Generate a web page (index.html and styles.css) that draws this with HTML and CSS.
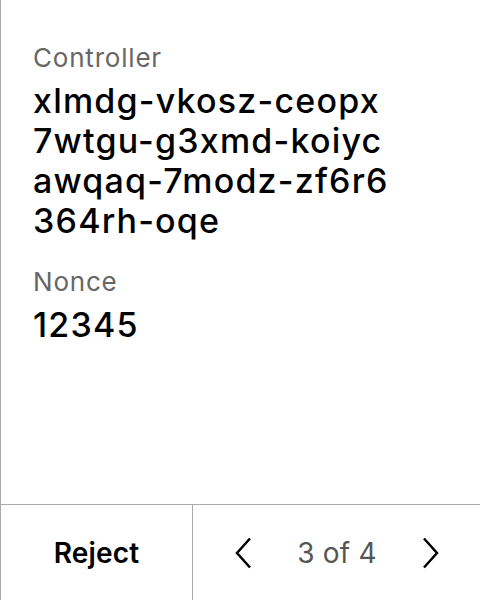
FILE: index.html
```html
<!DOCTYPE html>
<html>
<head>
<meta charset="utf-8">
<link rel="stylesheet" href="styles.css">
</head>
<body>
<div class="screen">
  <div class="content">
    <div class="field">
      <div class="label">Controller</div>
      <div class="value">xlmdg-vkosz-ceopx<br>7wtgu-g3xmd-koiyc<br>awqaq-7modz-zf6r6<br>364rh-oqe</div>
    </div>
    <div class="field">
      <div class="label">Nonce</div>
      <div class="value">12345</div>
    </div>
  </div>
  <div class="footer">
    <div class="reject">Reject</div>
    <div class="pager">
      <svg class="chev" width="17" height="32" viewBox="0 0 17 32"><path d="M15 1.5 L2 16 L15 30.5" fill="none" stroke="#000" stroke-width="2.5"/></svg>
      <span class="count">3 of 4</span>
      <svg class="chev" width="17" height="32" viewBox="0 0 17 32"><path d="M2 1.5 L15 16 L2 30.5" fill="none" stroke="#000" stroke-width="2.5"/></svg>
    </div>
  </div>
</div>
</body>
</html>
```
FILE: styles.css
```css
html, body { margin: 0; padding: 0; background: #fff; }
body { font-family: Inter, "Noto Sans", sans-serif; }
.screen {
  width: 479px; height: 600px;
  border-left: 1px solid #aaa;
  display: flex; flex-direction: column;
}
.content { flex: 1; padding: 42px 0 0 32px; display: flex; flex-direction: column; gap: 25px; }
.label { font-size: 26px; color: #666; line-height: 32px; letter-spacing: 0.8px; margin-bottom: 7px; }
.value { font-size: 34px; font-weight: 500; color: #000; line-height: 40px; letter-spacing: 1.2px; }
.footer {
  height: 95px; border-top: 1px solid #aaa;
  display: flex;
}
.reject {
  width: 191px; border-right: 1px solid #aaa;
  display: flex; align-items: center; justify-content: center;
  font-size: 28px; font-weight: 600; color: #000; letter-spacing: 0.2px;
}
.pager { flex: 1; display: flex; align-items: center; justify-content: space-between; padding: 0 41px 0 42px; }
.count { font-size: 28px; color: #555; letter-spacing: 0.2px; }
.chev { display: block; }
```
